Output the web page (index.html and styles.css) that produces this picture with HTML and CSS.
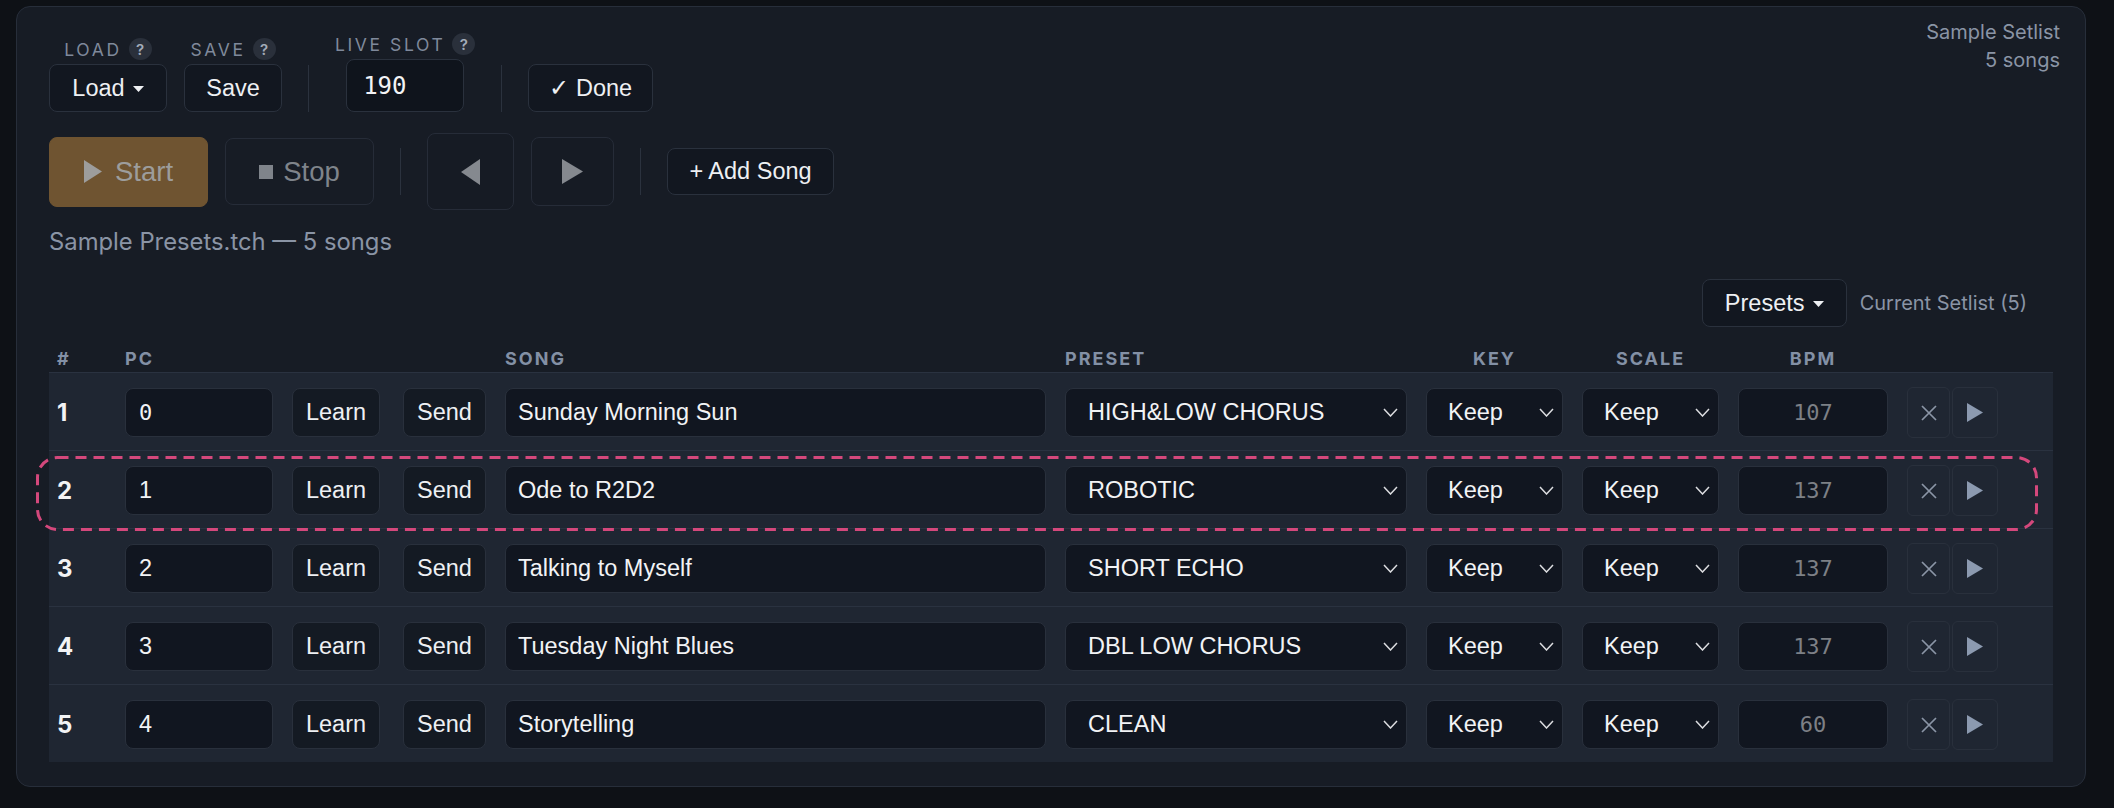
FILE: index.html
```
<!DOCTYPE html>
<html lang="en">
<head>
    <meta charset="UTF-8">
    <meta name="viewport" content="width=device-width, initial-scale=1.0">
    <title>Setlist</title>
    <link rel="stylesheet" href="styles.css">
</head>
<body>

<div class="panel">
    <div class="top">
        <div class="controls">
            <!-- File + live slot -->
            <div class="toolbar">
                <div class="field">
                    <div class="label">LOAD <span class="help">?</span></div>
                    <button class="btn load">Load <svg class="caret" width="11" height="6" viewBox="0 0 11 6"><path d="M0 0h11L5.5 6z" fill="#eef0f3"/></svg></button>
                </div>
                <div class="field">
                    <div class="label">SAVE <span class="help">?</span></div>
                    <button class="btn save">Save</button>
                </div>
                <div class="sep"></div>
                <div class="field">
                    <div class="label">LIVE SLOT <span class="help">?</span></div>
                    <input class="slot-input" type="text" value="190">
                </div>
                <div class="sep"></div>
                <button class="btn done">✓ Done</button>
            </div>

            <!-- Transport -->
            <div class="transport">
                <button class="btn start">
                    <svg width="18" height="23" viewBox="0 0 18 23"><path d="M0 0l18 11.5L0 23z" fill="#9d9d9c"/></svg>
                    Start
                </button>
                <button class="btn stop">
                    <svg width="14" height="14" viewBox="0 0 14 14"><rect width="14" height="14" fill="#7f848b"/></svg>
                    Stop
                </button>
                <div class="sep short"></div>
                <button class="btn nav prev">
                    <svg width="19" height="26" viewBox="0 0 19 26"><path d="M19 0v26L0 13z" fill="#85898f"/></svg>
                </button>
                <button class="btn nav next">
                    <svg width="21" height="25" viewBox="0 0 21 25"><path d="M0 0l21 12.5L0 25z" fill="#85898f"/></svg>
                </button>
                <div class="sep short"></div>
                <button class="btn add">+ Add Song</button>
            </div>

            <div class="meta">Sample Presets.tch — 5 songs</div>
        </div>

        <div class="setlist-info">Sample Setlist<br>5 songs</div>
    </div>

    <div class="list-bar">
        <button class="btn presets">Presets <svg class="caret" width="11" height="6" viewBox="0 0 11 6"><path d="M0 0h11L5.5 6z" fill="#eef0f3"/></svg></button>
        <span class="list-name">Current Setlist (5)</span>
    </div>

    <div class="songs">
        <div class="song-head">
            <div>#</div>
            <div>PC</div>
            <div></div>
            <div></div>
            <div>SONG</div>
            <div>PRESET</div>
            <div class="center">KEY</div>
            <div class="center">SCALE</div>
            <div class="center">BPM</div>
            <div></div>
        </div>

        <div class="song-row">
            <div class="num">1</div>
            <input class="box pc mono" type="text" value="0">
            <button class="btn small learn">Learn</button>
            <button class="btn small">Send</button>
            <input class="box" type="text" value="Sunday Morning Sun">
            <div class="box select preset"><span>HIGH&amp;LOW CHORUS</span><svg width="15" height="9" viewBox="0 0 15 9"><path d="M1 1l6.5 7L14 1" fill="none" stroke="#dcdde0" stroke-width="1.5"/></svg></div>
            <div class="box select"><span>Keep</span><svg width="15" height="9" viewBox="0 0 15 9"><path d="M1 1l6.5 7L14 1" fill="none" stroke="#dcdde0" stroke-width="1.5"/></svg></div>
            <div class="box select"><span>Keep</span><svg width="15" height="9" viewBox="0 0 15 9"><path d="M1 1l6.5 7L14 1" fill="none" stroke="#dcdde0" stroke-width="1.5"/></svg></div>
            <input class="box bpm" type="text" value="107">
            <div class="actions">
                <button class="icon-btn remove"><svg width="16" height="16" viewBox="0 0 16 16"><path d="M1 1l14 14M15 1L1 15" stroke="#8b95a6" stroke-width="1.7"/></svg></button>
                <button class="icon-btn play"><svg width="16" height="19" viewBox="0 0 16 19"><path d="M0 0l16 9.5L0 19z" fill="#8c9ab0"/></svg></button>
            </div>
        </div>

        <div class="song-row">
            <div class="num">2</div>
            <input class="box pc" type="text" value="1">
            <button class="btn small learn">Learn</button>
            <button class="btn small">Send</button>
            <input class="box" type="text" value="Ode to R2D2">
            <div class="box select preset"><span>ROBOTIC</span><svg width="15" height="9" viewBox="0 0 15 9"><path d="M1 1l6.5 7L14 1" fill="none" stroke="#dcdde0" stroke-width="1.5"/></svg></div>
            <div class="box select"><span>Keep</span><svg width="15" height="9" viewBox="0 0 15 9"><path d="M1 1l6.5 7L14 1" fill="none" stroke="#dcdde0" stroke-width="1.5"/></svg></div>
            <div class="box select"><span>Keep</span><svg width="15" height="9" viewBox="0 0 15 9"><path d="M1 1l6.5 7L14 1" fill="none" stroke="#dcdde0" stroke-width="1.5"/></svg></div>
            <input class="box bpm" type="text" value="137">
            <div class="actions">
                <button class="icon-btn remove"><svg width="16" height="16" viewBox="0 0 16 16"><path d="M1 1l14 14M15 1L1 15" stroke="#8b95a6" stroke-width="1.7"/></svg></button>
                <button class="icon-btn play"><svg width="16" height="19" viewBox="0 0 16 19"><path d="M0 0l16 9.5L0 19z" fill="#8c9ab0"/></svg></button>
            </div>
        </div>

        <div class="song-row">
            <div class="num">3</div>
            <input class="box pc" type="text" value="2">
            <button class="btn small learn">Learn</button>
            <button class="btn small">Send</button>
            <input class="box" type="text" value="Talking to Myself">
            <div class="box select preset"><span>SHORT ECHO</span><svg width="15" height="9" viewBox="0 0 15 9"><path d="M1 1l6.5 7L14 1" fill="none" stroke="#dcdde0" stroke-width="1.5"/></svg></div>
            <div class="box select"><span>Keep</span><svg width="15" height="9" viewBox="0 0 15 9"><path d="M1 1l6.5 7L14 1" fill="none" stroke="#dcdde0" stroke-width="1.5"/></svg></div>
            <div class="box select"><span>Keep</span><svg width="15" height="9" viewBox="0 0 15 9"><path d="M1 1l6.5 7L14 1" fill="none" stroke="#dcdde0" stroke-width="1.5"/></svg></div>
            <input class="box bpm" type="text" value="137">
            <div class="actions">
                <button class="icon-btn remove"><svg width="16" height="16" viewBox="0 0 16 16"><path d="M1 1l14 14M15 1L1 15" stroke="#8b95a6" stroke-width="1.7"/></svg></button>
                <button class="icon-btn play"><svg width="16" height="19" viewBox="0 0 16 19"><path d="M0 0l16 9.5L0 19z" fill="#8c9ab0"/></svg></button>
            </div>
        </div>

        <div class="song-row">
            <div class="num">4</div>
            <input class="box pc" type="text" value="3">
            <button class="btn small learn">Learn</button>
            <button class="btn small">Send</button>
            <input class="box" type="text" value="Tuesday Night Blues">
            <div class="box select preset"><span>DBL LOW CHORUS</span><svg width="15" height="9" viewBox="0 0 15 9"><path d="M1 1l6.5 7L14 1" fill="none" stroke="#dcdde0" stroke-width="1.5"/></svg></div>
            <div class="box select"><span>Keep</span><svg width="15" height="9" viewBox="0 0 15 9"><path d="M1 1l6.5 7L14 1" fill="none" stroke="#dcdde0" stroke-width="1.5"/></svg></div>
            <div class="box select"><span>Keep</span><svg width="15" height="9" viewBox="0 0 15 9"><path d="M1 1l6.5 7L14 1" fill="none" stroke="#dcdde0" stroke-width="1.5"/></svg></div>
            <input class="box bpm" type="text" value="137">
            <div class="actions">
                <button class="icon-btn remove"><svg width="16" height="16" viewBox="0 0 16 16"><path d="M1 1l14 14M15 1L1 15" stroke="#8b95a6" stroke-width="1.7"/></svg></button>
                <button class="icon-btn play"><svg width="16" height="19" viewBox="0 0 16 19"><path d="M0 0l16 9.5L0 19z" fill="#8c9ab0"/></svg></button>
            </div>
        </div>

        <div class="song-row">
            <div class="num">5</div>
            <input class="box pc" type="text" value="4">
            <button class="btn small learn">Learn</button>
            <button class="btn small">Send</button>
            <input class="box" type="text" value="Storytelling">
            <div class="box select preset"><span>CLEAN</span><svg width="15" height="9" viewBox="0 0 15 9"><path d="M1 1l6.5 7L14 1" fill="none" stroke="#dcdde0" stroke-width="1.5"/></svg></div>
            <div class="box select"><span>Keep</span><svg width="15" height="9" viewBox="0 0 15 9"><path d="M1 1l6.5 7L14 1" fill="none" stroke="#dcdde0" stroke-width="1.5"/></svg></div>
            <div class="box select"><span>Keep</span><svg width="15" height="9" viewBox="0 0 15 9"><path d="M1 1l6.5 7L14 1" fill="none" stroke="#dcdde0" stroke-width="1.5"/></svg></div>
            <input class="box bpm" type="text" value="60">
            <div class="actions">
                <button class="icon-btn remove"><svg width="16" height="16" viewBox="0 0 16 16"><path d="M1 1l14 14M15 1L1 15" stroke="#8b95a6" stroke-width="1.7"/></svg></button>
                <button class="icon-btn play"><svg width="16" height="19" viewBox="0 0 16 19"><path d="M0 0l16 9.5L0 19z" fill="#8c9ab0"/></svg></button>
            </div>
        </div>

        <!-- live slot highlight -->
        <svg class="live-outline" width="100%" height="100%"><rect x="1.5" y="1.5" width="1999" height="72" rx="20" fill="none" stroke="#d4487c" stroke-width="3" stroke-dasharray="11 7"/></svg>
    </div>
</div>

</body>
</html>
```

FILE: styles.css
```
body {
    margin: 0;
    background-color: #0e1116;
    font-family: Inter, "Liberation Sans", sans-serif;
    color: #eef0f3;
}
.panel {
    margin: 6px 28px 20px 16px;
    padding: 26px 32px 24px;
    background-color: #171c25;
    border: 1px solid #272e3a;
    border-radius: 14px;
}
.top {
    display: flex;
    justify-content: space-between;
    align-items: flex-start;
}
.setlist-info {
    margin: -15px -7px 0 0;
    text-align: right;
    font-size: 20px;
    line-height: 28px;
    color: #8a94a5;
}

/* buttons */
.btn {
    display: inline-flex;
    align-items: center;
    justify-content: center;
    gap: 8px;
    height: 48px;
    padding: 0;
    background-color: #121720;
    border: 1px solid #2a313d;
    border-radius: 8px;
    color: #eef0f3;
    font-family: "Liberation Sans", Arial, sans-serif;
    font-size: 23.5px;
    white-space: nowrap;
}
.caret {
    margin-top: 2px;
}
.load {
    width: 118px;
}
.save {
    width: 98px;
}
.done {
    width: 125px;
}
.presets {
    width: 145px;
}

.toolbar {
    display: flex;
    align-items: flex-end;
    gap: 17px;
}
.field {
    display: flex;
    flex-direction: column;
    align-items: center;
    gap: 4px;
}
.label {
    display: flex;
    align-items: center;
    gap: 7px;
    font-size: 17.5px;
    letter-spacing: 2.6px;
    color: #7f899b;
}
.help {
    display: flex;
    align-items: center;
    justify-content: center;
    width: 23px;
    height: 22px;
    border-radius: 50%;
    background-color: #2a303b;
    color: #a3acb9;
    font-size: 15px;
    font-weight: 600;
    letter-spacing: 0;
}
.sep {
    width: 1px;
    height: 47px;
    margin: 0 9px;
    background-color: #2b323e;
}
.slot-input {
    box-sizing: border-box;
    width: 118px;
    height: 53px;
    padding: 0 16px;
    background-color: #0f141c;
    border: 1px solid #2a313d;
    border-radius: 8px;
    color: #f2f3f5;
    font-family: "DejaVu Sans Mono", "Liberation Mono", monospace;
    font-size: 24px;
}

.transport {
    display: flex;
    align-items: center;
    gap: 17px;
    margin-top: 21px;
}
.start {
    width: 159px;
    height: 70px;
    gap: 13px;
    background-color: #6f5431;
    border-color: #6f5431;
    color: #9d9d9c;
    font-size: 27.5px;
}
.stop {
    width: 149px;
    height: 67px;
    gap: 10px;
    background-color: transparent;
    border-color: #262c38;
    color: #7f848b;
    font-size: 27.5px;
}
.nav {
    background-color: #161b24;
    border-color: #262c38;
}
.prev {
    width: 87px;
    height: 77px;
}
.next {
    width: 83px;
    height: 69px;
}
.add {
    width: 167px;
    height: 47px;
}
.meta {
    margin-top: 17px;
    font-size: 23.8px;
    line-height: 30px;
    color: #8a94a5;
}

.list-bar {
    display: flex;
    justify-content: flex-end;
    align-items: center;
    gap: 13px;
    margin: 22px 0 21px;
    padding-right: 26px;
}
.list-name {
    font-size: 20px;
    color: #8a94a5;
}

/* song table */
.songs {
    position: relative;
}
.song-head,
.song-row {
    display: grid;
    grid-template-columns: 49px 148px 92px 83px 1fr 342px 137px 137px 150px 91px;
    column-gap: 19px;
    padding: 0 55px 0 8px;
}
.song-head {
    padding-bottom: 2px;
    font-size: 18px;
    line-height: 22px;
    font-weight: 700;
    letter-spacing: 2px;
    color: #8390a5;
}
.song-head .center {
    text-align: center;
}
.song-row {
    align-items: center;
    height: 49px;
    padding-top: 14px;
    padding-bottom: 14px;
    background-color: #1f2632;
    border-top: 1px solid #2a3240;
}
.num {
    font-size: 24px;
    font-weight: 700;
    color: #f2f3f5;
}
.box {
    box-sizing: border-box;
    width: 100%;
    height: 49px;
    padding: 0 12px;
    background-color: #111620;
    border: 1px solid #29303c;
    border-radius: 8px;
    color: #f2f3f5;
    font-family: "Liberation Sans", Arial, sans-serif;
    font-size: 23.5px;
}
.pc {
    padding-left: 13px;
}
.mono {
    font-family: "DejaVu Sans Mono", "Liberation Mono", monospace;
    font-size: 22px;
}
.btn.small {
    height: 49px;
    background-color: #141a23;
    border-color: #29303c;
    width: 83px;
}
.btn.learn {
    width: 88px;
}
.select {
    display: flex;
    align-items: center;
    justify-content: space-between;
    padding: 0 8px 0 21px;
}
.preset {
    padding-left: 22px;
}
.bpm {
    text-align: center;
    color: #7d8086;
    font-family: "DejaVu Sans Mono", "Liberation Mono", monospace;
    font-size: 22px;
}
.actions {
    display: flex;
    gap: 2px;
}
.icon-btn {
    display: flex;
    align-items: center;
    justify-content: center;
    height: 51px;
    padding: 0;
    background-color: transparent;
    border: 1px solid #29303c;
    border-radius: 6px;
}
.remove {
    width: 43px;
}
.play {
    width: 46px;
}
.live-outline {
    position: absolute;
    left: -13px;
    right: 15px;
    top: 108px;
    width: auto;
    height: 75px;
    overflow: visible;
}
```
